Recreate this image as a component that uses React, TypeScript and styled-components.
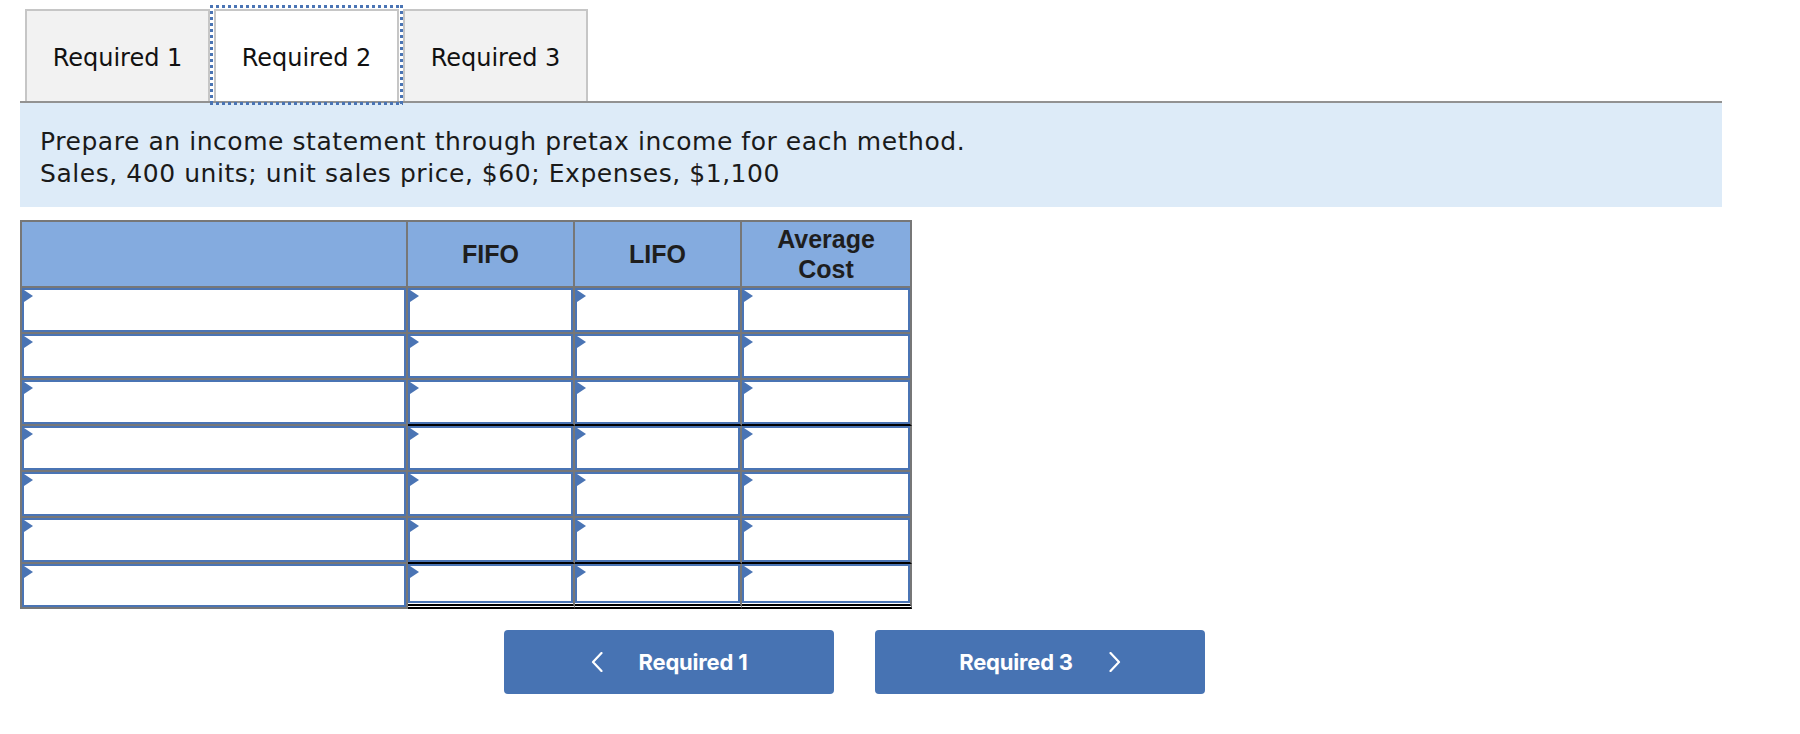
import React from 'react';
import styled, { createGlobalStyle } from 'styled-components';

const GlobalStyle = createGlobalStyle`
  html, body { margin: 0; padding: 0; background: #fff; }
  *, *::before, *::after { box-sizing: border-box; }
  body { font-family: "DejaVu Sans", Verdana, sans-serif; color: #1a1a1a; }
`;

const BLUE = '#4a74b4';
const GRAY = '#777777';

const Page = styled.div`
  padding: 9px 0 30px 20px;
`;

const TabBar = styled.div`
  display: flex;
  gap: 4px;
  width: 1702px;
  padding-left: 5px;
  border-bottom: 2px solid #929292;
`;

const dots = (dir: string) =>
  `repeating-linear-gradient(${dir}, #4a74b4 0 3px, transparent 3px 6px)`;

const Tab = styled.button<{ $active?: boolean }>`
  position: relative;
  width: 185px;
  height: 92px;
  padding: 4px 0 0;
  border: 2px solid #c6c6c6;
  border-bottom: none;
  background: ${(p) => (p.$active ? '#ffffff' : '#f2f2f2')};
  font: 400 24px "DejaVu Sans", Verdana, sans-serif;
  color: #111;
  cursor: pointer;
  outline: none;

  &::after {
    content: '';
    display: ${(p) => (p.$active ? 'block' : 'none')};
    position: absolute;
    inset: -6px -6px -4px -6px;
    pointer-events: none;
    background:
      ${dots('90deg')} top / 100% 3px no-repeat,
      ${dots('90deg')} bottom / 100% 3px no-repeat,
      ${dots('180deg')} left / 3px 100% no-repeat,
      ${dots('180deg')} right / 3px 100% no-repeat;
  }
`;

const Intro = styled.div`
  width: 1702px;
  background: #ddebf8;
  padding: 23px 20px 17px;
  font-size: 25px;
  letter-spacing: 0.55px;
  line-height: 32px;
  color: #1a1a1a;
`;

const Grid = styled.table`
  margin-top: 13px;
  border-collapse: separate;
  border-spacing: 0;
  table-layout: fixed;
  width: 892px;
`;

const HeadCell = styled.th<{ $w: number; $first?: boolean }>`
  width: ${(p) => p.$w}px;
  height: 68px;
  padding: 0;
  background: #84abdf;
  border-top: 2px solid ${GRAY};
  border-bottom: 2px solid ${GRAY};
  border-right: 2px solid ${GRAY};
  border-left: ${(p) => (p.$first ? `2px solid ${GRAY}` : 'none')};
  font: 700 25px/30px "Liberation Sans", Arial, sans-serif;
  color: #1e1e1e;
  text-align: center;
  vertical-align: middle;
`;

type Line = 'gray' | 'single' | 'double';

const lineStyle = (l: Line) =>
  l === 'double' ? '5px double #000' : l === 'single' ? '2px solid #000' : `2px solid ${GRAY}`;

const Cell = styled.td<{ $first?: boolean; $line: Line }>`
  position: relative;
  padding: 0;
  vertical-align: top;
  background: #fff;
  border-right: 2px solid ${GRAY};
  border-left: ${(p) => (p.$first ? `2px solid ${GRAY}` : 'none')};
  border-bottom: ${(p) => lineStyle(p.$line)};
`;

const Entry = styled.input<{ $h: number; $gap?: number }>`
  display: block;
  width: 100%;
  height: ${(p) => p.$h}px;
  margin-bottom: ${(p) => p.$gap ?? 0}px;
  border: 2px solid ${BLUE};
  border-radius: 0;
  background: #fff;
  outline: none;
  padding: 0 8px;
  font: 400 18px "Liberation Sans", Arial, sans-serif;
`;

const Marker = styled.span`
  position: absolute;
  top: 2px;
  left: 2px;
  width: 0;
  height: 0;
  border-left: 9px solid ${BLUE};
  border-top: 6.5px solid transparent;
  border-bottom: 6.5px solid transparent;
  pointer-events: none;
`;

const Nav = styled.div`
  display: flex;
  gap: 41px;
  margin-top: 21px;
  padding-left: 484px;
`;

const NavButton = styled.button`
  width: 330px;
  height: 64px;
  border: none;
  border-radius: 4px;
  background: #4773b3;
  color: #fff;
  font: 700 22px Inter, Roboto, "Liberation Sans", Arial, sans-serif;
  letter-spacing: -0.2px;
  display: flex;
  align-items: center;
  justify-content: center;
  gap: 36px;
  cursor: pointer;
  padding: 0;
`;

const Chevron = ({ dir }: { dir: 'left' | 'right' }) => (
  <svg width="12" height="20" viewBox="0 0 12 20" fill="none">
    <polyline
      points={dir === 'left' ? '10.5,1 2,10 10.5,19' : '1.5,1 10,10 1.5,19'}
      stroke="#fff"
      strokeWidth="2.2"
      strokeLinecap="round"
      strokeLinejoin="round"
    />
  </svg>
);

const widths = [388, 167, 167, 170];
const numLines: Line[] = ['gray', 'gray', 'single', 'gray', 'gray', 'single', 'double'];

export default function App() {
  return (
    <>
      <GlobalStyle />
      <Page>
        <TabBar>
          <Tab>Required 1</Tab>
          <Tab $active>Required 2</Tab>
          <Tab>Required 3</Tab>
        </TabBar>
        <Intro>
          Prepare an income statement through pretax income for each method.
          <br />
          Sales, 400 units; unit sales price, $60; Expenses, $1,100
        </Intro>
        <Grid>
          <thead>
            <tr>
              <HeadCell $w={widths[0]} $first />
              <HeadCell $w={widths[1]}>FIFO</HeadCell>
              <HeadCell $w={widths[2]}>LIFO</HeadCell>
              <HeadCell $w={widths[3]}>
                Average
                <br />
                Cost
              </HeadCell>
            </tr>
          </thead>
          <tbody>
            {numLines.map((line, r) => {
              const last = line === 'double';
              return (
                <tr key={r}>
                  <Cell $first $line="gray">
                    <Entry $h={last ? 43 : 44} aria-label={`Row ${r + 1} label`} />
                    <Marker />
                  </Cell>
                  {[0, 1, 2].map((c) => (
                    <Cell key={c} $line={line}>
                      <Entry $h={last ? 39 : 44} $gap={last ? 1 : 0} aria-label={`Row ${r + 1} column ${c + 1}`} />
                      <Marker />
                    </Cell>
                  ))}
                </tr>
              );
            })}
          </tbody>
        </Grid>
        <Nav>
          <NavButton>
            <Chevron dir="left" />
            Required 1
          </NavButton>
          <NavButton>
            Required 3
            <Chevron dir="right" />
          </NavButton>
        </Nav>
      </Page>
    </>
  );
}
